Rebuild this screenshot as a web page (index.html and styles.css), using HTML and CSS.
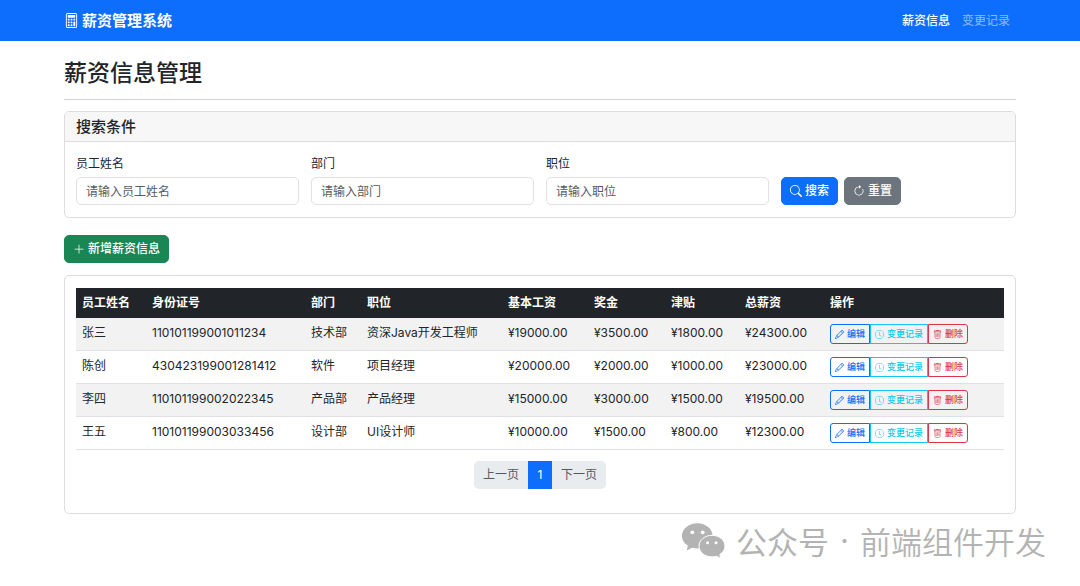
FILE: index.html
```html
<!DOCTYPE html>
<html lang="zh-CN">
<head>
    <meta charset="UTF-8">
    <meta name="viewport" content="width=device-width, initial-scale=1.0">
    <title>薪资管理系统</title>
    <link rel="stylesheet" href="styles.css">
</head>
<body>
    <!-- 图标 -->
    <svg class="sprite" aria-hidden="true">
        <symbol id="i-calculator" viewBox="0 0 16 16">
            <path d="M12 1a1 1 0 0 1 1 1v12a1 1 0 0 1-1 1H4a1 1 0 0 1-1-1V2a1 1 0 0 1 1-1zM4 0a2 2 0 0 0-2 2v12a2 2 0 0 0 2 2h8a2 2 0 0 0 2-2V2a2 2 0 0 0-2-2z"/>
            <path d="M4 2.5a.5.5 0 0 1 .5-.5h7a.5.5 0 0 1 .5.5v2a.5.5 0 0 1-.5.5h-7a.5.5 0 0 1-.5-.5zm0 4a.5.5 0 0 1 .5-.5h1a.5.5 0 0 1 .5.5v1a.5.5 0 0 1-.5.5h-1a.5.5 0 0 1-.5-.5zm0 3a.5.5 0 0 1 .5-.5h1a.5.5 0 0 1 .5.5v1a.5.5 0 0 1-.5.5h-1a.5.5 0 0 1-.5-.5zm0 3a.5.5 0 0 1 .5-.5h1a.5.5 0 0 1 .5.5v1a.5.5 0 0 1-.5.5h-1a.5.5 0 0 1-.5-.5zm3-6a.5.5 0 0 1 .5-.5h1a.5.5 0 0 1 .5.5v1a.5.5 0 0 1-.5.5h-1a.5.5 0 0 1-.5-.5zm0 3a.5.5 0 0 1 .5-.5h1a.5.5 0 0 1 .5.5v1a.5.5 0 0 1-.5.5h-1a.5.5 0 0 1-.5-.5zm0 3a.5.5 0 0 1 .5-.5h1a.5.5 0 0 1 .5.5v1a.5.5 0 0 1-.5.5h-1a.5.5 0 0 1-.5-.5zm3-6a.5.5 0 0 1 .5-.5h1a.5.5 0 0 1 .5.5v1a.5.5 0 0 1-.5.5h-1a.5.5 0 0 1-.5-.5zm0 3a.5.5 0 0 1 .5-.5h1a.5.5 0 0 1 .5.5v4a.5.5 0 0 1-.5.5h-1a.5.5 0 0 1-.5-.5z"/>
        </symbol>
        <symbol id="i-search" viewBox="0 0 16 16">
            <path d="M11.742 10.344a6.5 6.5 0 1 0-1.397 1.398h-.001q.044.06.098.115l3.85 3.85a1 1 0 0 0 1.415-1.414l-3.85-3.85a1 1 0 0 0-.115-.1zM12 6.5a5.5 5.5 0 1 1-11 0 5.5 5.5 0 0 1 11 0"/>
        </symbol>
        <symbol id="i-reset" viewBox="0 0 16 16">
            <path fill-rule="evenodd" d="M8 3a5 5 0 1 0 4.546 2.914.5.5 0 0 1 .908-.417A6 6 0 1 1 8 2z"/>
            <path d="M8 4.466V.534a.25.25 0 0 1 .41-.192l2.36 1.966c.12.1.12.284 0 .384L8.41 4.658A.25.25 0 0 1 8 4.466"/>
        </symbol>
        <symbol id="i-plus" viewBox="0 0 16 16">
            <path fill-rule="evenodd" d="M8 2a.5.5 0 0 1 .5.5v5h5a.5.5 0 0 1 0 1h-5v5a.5.5 0 0 1-1 0v-5h-5a.5.5 0 0 1 0-1h5v-5A.5.5 0 0 1 8 2"/>
        </symbol>
        <symbol id="i-pencil" viewBox="0 0 16 16">
            <path d="M12.146.146a.5.5 0 0 1 .708 0l3 3a.5.5 0 0 1 0 .708l-10 10a.5.5 0 0 1-.168.11l-5 2a.5.5 0 0 1-.65-.65l2-5a.5.5 0 0 1 .11-.168zM11.207 2.5 13.5 4.793 14.793 3.5 12.5 1.207zm1.586 3L10.5 3.207 4 9.707V10h.5a.5.5 0 0 1 .5.5v.5h.5a.5.5 0 0 1 .5.5v.5h.293zm-9.761 5.175-.106.106-1.528 3.821 3.821-1.528.106-.106A.5.5 0 0 1 5 12.5V12h-.5a.5.5 0 0 1-.5-.5V11h-.5a.5.5 0 0 1-.468-.325"/>
        </symbol>
        <symbol id="i-clock" viewBox="0 0 16 16">
            <path d="M8 3.5a.5.5 0 0 0-1 0V9a.5.5 0 0 0 .252.434l3.5 2a.5.5 0 0 0 .496-.868L8 8.71z"/>
            <path d="M8 16A8 8 0 1 0 8 0a8 8 0 0 0 0 16m7-8A7 7 0 1 1 1 8a7 7 0 0 1 14 0"/>
        </symbol>
        <symbol id="i-trash" viewBox="0 0 16 16">
            <path d="M5.5 5.5A.5.5 0 0 1 6 6v6a.5.5 0 0 1-1 0V6a.5.5 0 0 1 .5-.5m2.5 0a.5.5 0 0 1 .5.5v6a.5.5 0 0 1-1 0V6a.5.5 0 0 1 .5-.5m3 .5a.5.5 0 0 0-1 0v6a.5.5 0 0 0 1 0z"/>
            <path d="M14.5 3a1 1 0 0 1-1 1H13v9a2 2 0 0 1-2 2H5a2 2 0 0 1-2-2V4h-.5a1 1 0 0 1-1-1V2a1 1 0 0 1 1-1H6a1 1 0 0 1 1-1h2a1 1 0 0 1 1 1h3.5a1 1 0 0 1 1 1zM4.118 4 4 4.059V13a1 1 0 0 0 1 1h6a1 1 0 0 0 1-1V4.059L11.882 4zM2.5 3h11V2h-11z"/>
        </symbol>
    </svg>

    <nav class="navbar">
        <div class="container navbar-inner">
            <a class="brand" href="#"><svg class="icon"><use href="#i-calculator"/></svg>薪资管理系统</a>
            <div class="nav-links">
                <a class="nav-link active" href="#">薪资信息</a>
                <a class="nav-link" href="#">变更记录</a>
            </div>
        </div>
    </nav>

    <main class="container">
        <h1 class="page-title">薪资信息管理</h1>
        <hr class="divider">

        <section class="card search-card">
            <h2 class="card-header">搜索条件</h2>
            <form class="card-body search-form">
                <div class="field">
                    <label for="name">员工姓名</label>
                    <input type="text" id="name" placeholder="请输入员工姓名">
                </div>
                <div class="field">
                    <label for="department">部门</label>
                    <input type="text" id="department" placeholder="请输入部门">
                </div>
                <div class="field">
                    <label for="position">职位</label>
                    <input type="text" id="position" placeholder="请输入职位">
                </div>
                <div class="form-actions">
                    <button type="button" class="btn btn-primary"><svg class="icon"><use href="#i-search"/></svg>搜索</button>
                    <button type="reset" class="btn btn-secondary"><svg class="icon"><use href="#i-reset"/></svg>重置</button>
                </div>
            </form>
        </section>

        <button type="button" class="btn btn-success"><svg class="icon"><use href="#i-plus"/></svg>新增薪资信息</button>

        <section class="card list-card">
            <div class="card-body">
                <table class="salary-table">
                    <colgroup>
                        <col class="col-name">
                        <col class="col-id">
                        <col class="col-dept">
                        <col class="col-position">
                        <col class="col-base">
                        <col class="col-bonus">
                        <col class="col-allowance">
                        <col class="col-total">
                        <col>
                    </colgroup>
                    <thead>
                        <tr>
                            <th>员工姓名</th>
                            <th>身份证号</th>
                            <th>部门</th>
                            <th>职位</th>
                            <th>基本工资</th>
                            <th>奖金</th>
                            <th>津贴</th>
                            <th>总薪资</th>
                            <th>操作</th>
                        </tr>
                    </thead>
                    <tbody>
                        <tr>
                            <td>张三</td>
                            <td>110101199001011234</td>
                            <td>技术部</td>
                            <td>资深Java开发工程师</td>
                            <td>¥19000.00</td>
                            <td>¥3500.00</td>
                            <td>¥1800.00</td>
                            <td>¥24300.00</td>
                            <td>
                                <div class="btn-group">
                                    <button type="button" class="btn-sm edit"><svg class="icon"><use href="#i-pencil"/></svg>编辑</button>
                                    <button type="button" class="btn-sm history"><svg class="icon"><use href="#i-clock"/></svg>变更记录</button>
                                    <button type="button" class="btn-sm delete"><svg class="icon"><use href="#i-trash"/></svg>删除</button>
                                </div>
                            </td>
                        </tr>
                        <tr>
                            <td>陈创</td>
                            <td>430423199001281412</td>
                            <td>软件</td>
                            <td>项目经理</td>
                            <td>¥20000.00</td>
                            <td>¥2000.00</td>
                            <td>¥1000.00</td>
                            <td>¥23000.00</td>
                            <td>
                                <div class="btn-group">
                                    <button type="button" class="btn-sm edit"><svg class="icon"><use href="#i-pencil"/></svg>编辑</button>
                                    <button type="button" class="btn-sm history"><svg class="icon"><use href="#i-clock"/></svg>变更记录</button>
                                    <button type="button" class="btn-sm delete"><svg class="icon"><use href="#i-trash"/></svg>删除</button>
                                </div>
                            </td>
                        </tr>
                        <tr>
                            <td>李四</td>
                            <td>110101199002022345</td>
                            <td>产品部</td>
                            <td>产品经理</td>
                            <td>¥15000.00</td>
                            <td>¥3000.00</td>
                            <td>¥1500.00</td>
                            <td>¥19500.00</td>
                            <td>
                                <div class="btn-group">
                                    <button type="button" class="btn-sm edit"><svg class="icon"><use href="#i-pencil"/></svg>编辑</button>
                                    <button type="button" class="btn-sm history"><svg class="icon"><use href="#i-clock"/></svg>变更记录</button>
                                    <button type="button" class="btn-sm delete"><svg class="icon"><use href="#i-trash"/></svg>删除</button>
                                </div>
                            </td>
                        </tr>
                        <tr>
                            <td>王五</td>
                            <td>110101199003033456</td>
                            <td>设计部</td>
                            <td>UI设计师</td>
                            <td>¥10000.00</td>
                            <td>¥1500.00</td>
                            <td>¥800.00</td>
                            <td>¥12300.00</td>
                            <td>
                                <div class="btn-group">
                                    <button type="button" class="btn-sm edit"><svg class="icon"><use href="#i-pencil"/></svg>编辑</button>
                                    <button type="button" class="btn-sm history"><svg class="icon"><use href="#i-clock"/></svg>变更记录</button>
                                    <button type="button" class="btn-sm delete"><svg class="icon"><use href="#i-trash"/></svg>删除</button>
                                </div>
                            </td>
                        </tr>
                    </tbody>
                </table>

                <nav class="pagination">
                    <a class="page-link disabled" href="#">上一页</a>
                    <a class="page-link current" href="#">1</a>
                    <a class="page-link disabled" href="#">下一页</a>
                </nav>
            </div>
        </section>
    </main>

    <div class="watermark">
        <svg class="wechat" viewBox="0 0 43 36" aria-hidden="true">
            <path d="M15.3.3C6.8.3 0 5.9 0 12.9c0 4 2.2 7.4 5.8 9.7L4.8 27.6l5.3-2.8c1.7.5 3.4.7 5.2.7 8.5 0 15.3-5.6 15.3-12.600S23.800.3 15.300.3z"/>
            <path class="front" d="M30 12.3c-7.2 0-13 4.8-13 10.8s5.8 10.8 13 10.8c1.5 0 3-.2 4.300-.6l4.500 2-1-3.800c3.200-2 5.200-5 5.200-8.400 0-6-5.800-10.800-13-10.800z"/>
            <circle class="eye" cx="10.3" cy="9.3" r="1.9"/>
            <circle class="eye" cx="20.7" cy="9.3" r="1.9"/>
            <circle class="eye" cx="25.6" cy="19.7" r="1.5"/>
            <circle class="eye" cx="34" cy="19.7" r="1.5"/>
        </svg>
        <span>公众号</span>
        <span class="dot">·</span>
        <span class="account">前端组件开发</span>
    </div>
</body>
</html>
```
FILE: styles.css
```css
* { box-sizing: border-box; }
body { margin: 0; background: #fff; color: #212529; font-family: Inter, "Noto Sans CJK SC", sans-serif; font-size: 12px; line-height: 18px; }
a { text-decoration: none; }
button, input { font: inherit; }
.sprite { display: none; }
.icon { width: 12px; height: 12px; fill: currentColor; flex: none; }
.container { width: 100%; max-width: 976px; margin: 0 auto; padding: 0 12px; }

/* 导航栏 */
.navbar { background: #0d6efd; padding: 6px 0; }
.navbar-inner { display: flex; align-items: center; justify-content: space-between; min-height: 29px; }
.brand { display: flex; align-items: center; gap: 3px; color: #fff; font-size: 15px; font-weight: 700; }
.brand .icon { width: 15px; height: 15px; }
.nav-links { display: flex; }
.nav-link { padding: 0 6px; color: rgba(255,255,255,0.55); }
.nav-link.active { color: #fff; font-weight: 500; }

.page-title { margin: 19px 0 12px; font-size: 23px; line-height: 27px; font-weight: 500; }
.divider { margin: 0 0 11px; border: 0; border-top: 1px solid #d3d3d4; }

/* 卡片 */
.card { border: 1px solid #dcdddd; border-radius: 5px; background: #fff; }
.card-header { margin: 0; padding: 6px 11px; font-size: 15px; line-height: 17px; font-weight: 500; background: #f7f7f7; border-bottom: 1px solid #dcdddd; border-radius: 4px 4px 0 0; }
.card-body { padding: 12px 11px; }
.search-card { margin-bottom: 17px; }
.list-card { margin-top: 12px; }

.search-form { display: grid; grid-template-columns: repeat(4, 1fr); gap: 12px; }
.field label { display: block; margin-bottom: 3px; line-height: 20px; }
.field input { display: block; width: 100%; height: 28px; padding: 4px 9px; border: 1px solid #dee2e6; border-radius: 5px; color: #212529; }
.field input::placeholder { color: #595c5f; opacity: 1; }
.form-actions { display: flex; align-items: flex-end; gap: 6px; }

/* 按钮 */
.btn { display: inline-flex; align-items: center; gap: 3px; height: 28px; padding: 4px 8px; border: 1px solid; border-radius: 5px; color: #fff; font-weight: 500; cursor: pointer; white-space: nowrap; }
.btn-primary { background: #0d6efd; border-color: #0d6efd; }
.btn-secondary { background: #6c757d; border-color: #6c757d; }
.btn-success { display: flex; background: #198754; border-color: #198754; }

.btn-group { display: flex; }
.btn-sm { display: flex; align-items: center; gap: 3px; height: 20px; padding: 0 4px; border: 1px solid; background: transparent; font-size: 9px; font-weight: 500; cursor: pointer; white-space: nowrap; }
.btn-sm .icon { width: 9px; height: 9px; }
.btn-sm:first-child { border-radius: 3px 0 0 3px; }
.btn-sm:last-child { border-radius: 0 3px 3px 0; }
.edit { color: #0d6efd; border-color: #0d6efd; }
.history { color: #0dcaf0; border-color: #0dcaf0; }
.delete { color: #dc3545; border-color: #dc3545; }

/* 薪资表格 */
.salary-table { width: 100%; table-layout: fixed; border-collapse: separate; border-spacing: 0; }
.salary-table th, .salary-table td { padding: 6px; text-align: left; vertical-align: top; white-space: nowrap; }
.salary-table th { background: #212529; color: #fff; font-weight: 700; }
.salary-table td { height: 33px; border-bottom: 1px solid #dee2e6; }
.salary-table tbody tr:nth-child(odd) { background: #f2f2f2; }
.col-name { width: 70px; }
.col-id { width: 159px; }
.col-dept { width: 56px; }
.col-position { width: 141px; }
.col-base { width: 86px; }
.col-bonus { width: 77px; }
.col-allowance { width: 74px; }
.col-total { width: 85px; }

.pagination { display: flex; justify-content: center; margin: 11px 0 12px; }
.page-link { min-width: 24px; padding: 5px 9px; background: #e9ecef; color: #565a5f; text-align: center; }
.page-link:first-child { border-radius: 5px 0 0 5px; }
.page-link:last-child { border-radius: 0 5px 5px 0; }
.page-link.current { padding: 5px 0; background: #0d6efd; color: #fff; }

/* 水印 */
.watermark { position: absolute; right: 34px; bottom: 25px; display: flex; align-items: center; gap: 11px; color: #b3b3b3; font-family: "Noto Sans CJK SC", sans-serif; font-size: 31px; line-height: 40px; white-space: nowrap; }
.dot { font-family: Inter, sans-serif; }
.account { font-weight: 350; }
.wechat { width: 43px; height: 36px; fill: #b3b3b3; }
.wechat .front { stroke: #fff; stroke-width: 1; }
.wechat .eye { fill: #fff; }
```
